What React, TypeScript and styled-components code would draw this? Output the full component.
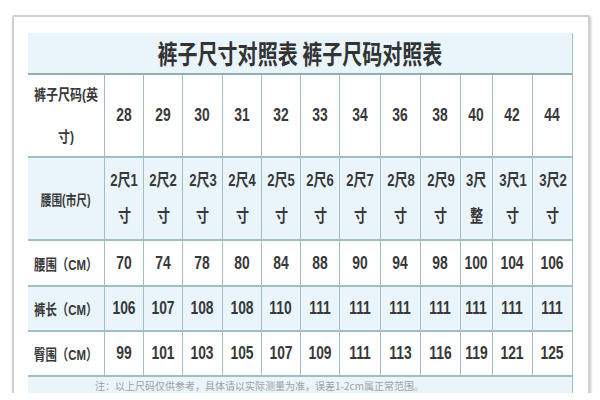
import styled, { createGlobalStyle } from 'styled-components';

const GlobalStyle = createGlobalStyle`
  html, body {
    margin: 0;
    padding: 0;
    background: #ffffff;
  }
`;

const sizes = ['28', '29', '30', '31', '32', '33', '34', '36', '38', '40', '42', '44'];
const shichi = ['2尺1', '2尺2', '2尺3', '2尺4', '2尺5', '2尺6', '2尺7', '2尺8', '2尺9', '3尺', '3尺1', '3尺2'];
const shichiTail = ['寸', '寸', '寸', '寸', '寸', '寸', '寸', '寸', '寸', '整', '寸', '寸'];
const waist = ['70', '74', '78', '80', '84', '88', '90', '94', '98', '100', '104', '106'];
const length = ['106', '107', '108', '108', '110', '111', '111', '111', '111', '111', '111', '111'];
const hip = ['99', '101', '103', '105', '107', '109', '111', '113', '116', '119', '121', '125'];

export default function App() {
  return (
    <>
      <GlobalStyle />
      <Page>
        <Frame>
          <Grid>
            <Title>
              <Squeeze>裤子尺寸对照表 裤子尺码对照表</Squeeze>
            </Title>

            <Cell>
              <HeadLabel>裤子尺码(英</HeadLabel>
              <HeadLabel>寸)</HeadLabel>
            </Cell>
            {sizes.map((s, i) => (
              <Cell key={'s' + i}>
                <Squeeze>{s}</Squeeze>
              </Cell>
            ))}

            <Cell $shade>
              <Label $size={14}>腰围(市尺)</Label>
            </Cell>
            {shichi.map((s, i) => (
              <Cell key={'c' + i} $shade>
                <TwoLine>{s}</TwoLine>
                <TwoLine>{shichiTail[i]}</TwoLine>
              </Cell>
            ))}

            <Cell>
              <Label>腰围（CM）</Label>
            </Cell>
            {waist.map((s, i) => (
              <Cell key={'w' + i}>
                <Squeeze>{s}</Squeeze>
              </Cell>
            ))}

            <Cell $shade>
              <Label>裤长（CM）</Label>
            </Cell>
            {length.map((s, i) => (
              <Cell key={'l' + i} $shade>
                <Squeeze>{s}</Squeeze>
              </Cell>
            ))}

            <Cell>
              <Label>臀围（CM）</Label>
            </Cell>
            {hip.map((s, i) => (
              <Cell key={'h' + i}>
                <Squeeze>{s}</Squeeze>
              </Cell>
            ))}

            <Note>注：以上尺码仅供参考，具体请以实际测量为准，误差1-2cm属正常范围。</Note>
          </Grid>
        </Frame>
      </Page>
    </>
  );
}

// Styled Components
const Page = styled.div`
  height: 393px;
  overflow: hidden;
  padding: 15px 8px 0 12px;
  box-sizing: border-box;
  background: #ffffff;
`;

const Frame = styled.div`
  width: 578px;
  min-height: 420px;
  box-sizing: border-box;
  border: 2px solid #cfcfcf;
  border-radius: 2px;
  box-shadow: 1px 1px 3px rgba(0, 0, 0, 0.22);
  padding: 16px 15px 0 14px;
  background: #ffffff;
`;

const Grid = styled.div`
  display: grid;
  grid-template-columns: 77px 39px 39px 40px 39px 39px 39px 41px 40px 40px 32px 40px 40px;
  grid-template-rows: 42px 83px 83px 46px 45px 45px 40px;
  width: 545px;
  font-family: "Liberation Sans", "Noto Sans CJK SC", sans-serif;
  color: #383838;
`;

const Title = styled.div`
  grid-column: 1 / -1;
  display: flex;
  align-items: center;
  justify-content: center;
  background: #e9f5fb;
  border-bottom: 2px solid #8fb1b2;
  border-right: 1px solid #a9c3c4;
  box-sizing: border-box;
  font-family: "Noto Sans CJK SC", sans-serif;
  font-size: 26px;
  font-weight: 600;
  color: #333333;
  padding-bottom: 2px;
`;

const Cell = styled.div<{ $shade?: boolean }>`
  display: flex;
  flex-direction: column;
  align-items: center;
  justify-content: center;
  box-sizing: border-box;
  background: ${(p) => (p.$shade ? '#e9f5fb' : '#ffffff')};
  border-bottom: 2px solid #9fbfc0;
  border-right: 1px solid #9fbfc0;
  font-size: 18px;
  font-weight: bold;
  white-space: nowrap;
`;

const Squeeze = styled.span`
  display: inline-block;
  transform: scaleX(0.77);
  white-space: nowrap;
`;

const TwoLine = styled(Squeeze)`
  font-size: 17px;
  line-height: 36px;
`;

const HeadLabel = styled(Squeeze)`
  font-size: 15px;
  line-height: 42px;
  transform: scaleX(0.8);
`;

const Label = styled(Squeeze)<{ $size?: number }>`
  font-size: ${(p) => p.$size ?? 15}px;
  transform: scaleX(0.76);
`;

const Note = styled.div`
  grid-column: 1 / -1;
  background: #e9f5fb;
  border-right: 1px solid #9fbfc0;
  padding: 3px 0 0 67px;
  font-family: "Noto Sans CJK SC", sans-serif;
  font-size: 10px;
  line-height: 12px;
  color: #a0a0a0;
  white-space: nowrap;
  overflow: hidden;
`;
